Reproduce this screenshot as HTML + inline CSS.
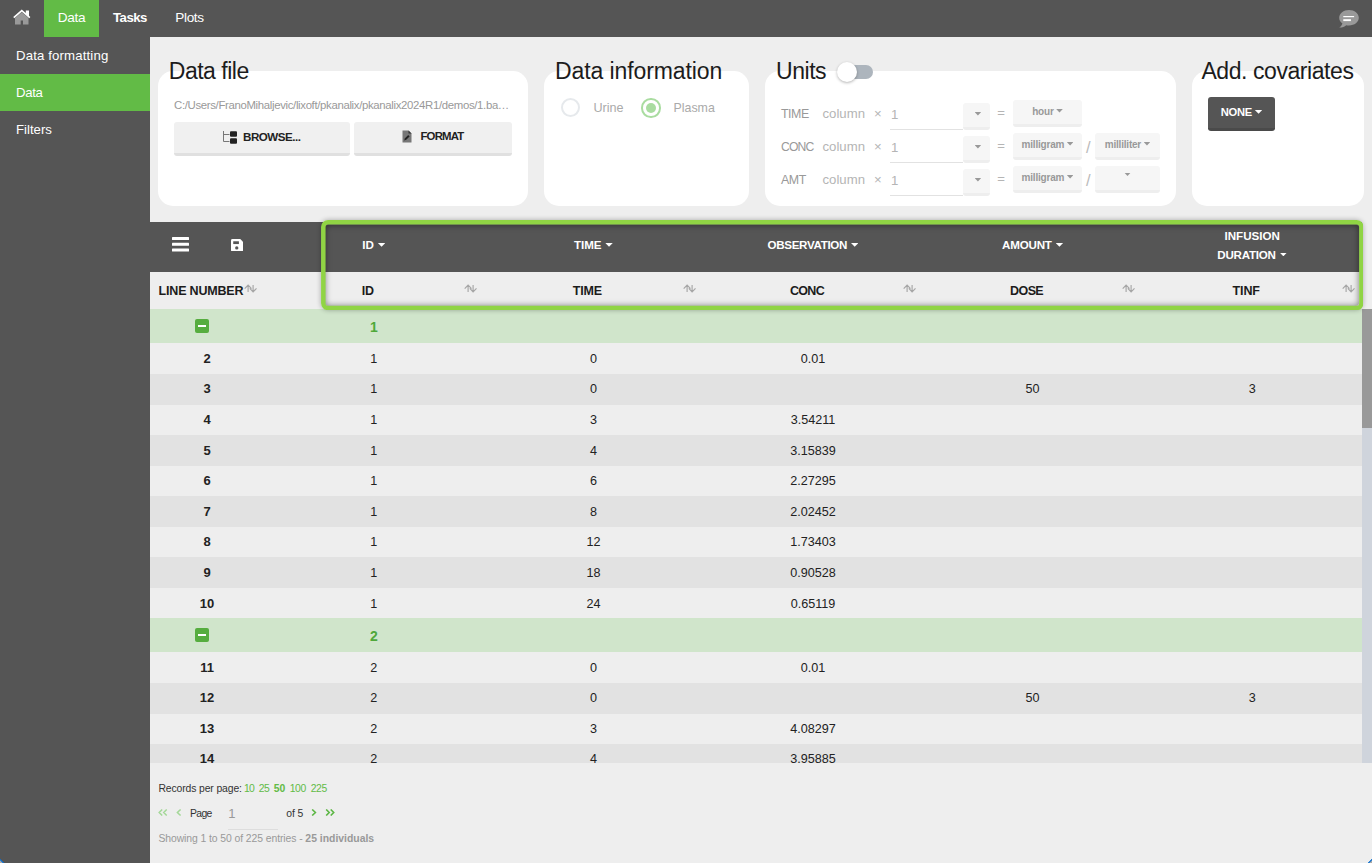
<!DOCTYPE html>
<html lang="en">
<head>
<meta charset="utf-8">
<title>PKanalix - Data</title>
<style>
*{box-sizing:border-box;margin:0;padding:0}
html,body{width:1372px;height:863px;overflow:hidden}
body{font-family:"Liberation Sans",sans-serif;font-size:13px;color:#222;background:#eee;position:relative}
.abs{position:absolute}
.t{position:absolute;white-space:nowrap;line-height:1}

/* top bar */
#topbar{position:absolute;left:0;top:0;width:1372px;height:37px;background:#555}
#topbar .tab{position:absolute;top:0;height:37px;color:#fff;font-size:13.6px;line-height:35.6px;text-align:center;letter-spacing:-.35px}
#topbar .tab.active{background:#62bb46}
#home{position:absolute;left:13px;top:8.6px}
#chat{position:absolute;left:1338px;top:9px}

/* sidebar */
#sidebar{position:absolute;left:0;top:37px;width:150px;height:826px;background:#555}
#sidebar .item{position:absolute;left:0;width:150px;height:37px;color:#fff;font-size:13.2px;line-height:37.4px;padding-left:16px}
#sidebar .item.active{background:#62bb46}

/* cards */
.card{position:absolute;background:#fff;border-radius:15px;top:71px;height:135px}
.card h2{position:absolute;top:-13.5px;font-weight:normal;font-size:23px;line-height:27px;color:#1c1c1c;white-space:nowrap}
.btn{position:absolute;background:#f0f0f0;border-bottom:3px solid #e0e0e0;border-radius:3px;font-weight:bold;color:#222;text-align:center;white-space:nowrap}
.ubtn{position:absolute;height:27px;background:#f6f6f6;border-bottom:3px solid #eee;border-radius:3px;color:#999;font-weight:bold;font-size:10px;line-height:24.2px;letter-spacing:-.2px;text-align:center;white-space:nowrap}
.caret{display:inline-block;width:7.4px;height:3.7px;background:currentColor;clip-path:polygon(0 0,100% 0,50% 100%);vertical-align:middle;margin-left:4px;position:relative;top:-1px}
.ubtn .caret{width:6.6px;height:3.5px;margin-left:2.6px;top:-1.6px}
.ulabel{position:absolute;color:#999;font-size:13.2px;line-height:16px;white-space:nowrap}
.ulabel.l{color:#b5b5b5}
.uline{position:absolute;left:125px;width:73px;height:1px;background:#e2e2e2}

/* table */
#grid{position:absolute;left:150px;top:222px;width:1212px;height:541px;overflow:hidden}
#gridhead{position:absolute;left:0;top:0;width:1212px;height:50px;background:#555}
.hcell{position:absolute;top:0;height:50px;color:#fff;font-weight:bold;font-size:11.6px;text-align:center;white-space:nowrap}
.h2cell{position:absolute;top:50px;height:37px;color:#1c1c1c;font-weight:bold;font-size:12.5px;line-height:38.6px;text-align:center;white-space:nowrap}
.row{position:absolute;left:0;width:1212px;height:31px;font-size:12.6px;line-height:33.5px;color:#222}
.row.odd{background:#e2e2e2}
.row.grp{height:34px;background:#d0e5cb;line-height:36.5px;color:#4fa83a;font-weight:bold;font-size:14px}
.row span{position:absolute;top:0;text-align:center;width:219.6px}
.row span.ln{left:0;width:114px;font-weight:bold;font-size:13px;top:-1px}
.row span.c1{left:114px}.row span.c2{left:333.6px}.row span.c3{left:553.2px}.row span.c4{left:772.8px}.row span.c5{left:992.4px}
.minus{position:absolute;left:44.8px;top:9.8px;width:14.2px;height:14.2px;background:#56ad3f;border-radius:2px}
.minus:after{content:"";position:absolute;left:3px;top:6.1px;width:8.4px;height:2px;background:#fff}
.sort{position:absolute;top:62px}
#hl{position:absolute;left:320.6px;top:220.3px;width:1042.7px;height:90.2px;border-radius:7px;box-shadow:0 0 5px rgba(0,0,0,.3)}
#hl i{position:absolute;left:4.5px;top:4.5px;right:4.5px;bottom:4.5px;border-radius:3px;box-shadow:inset 0 0 6px rgba(0,0,0,.5)}
#hl svg{position:absolute;left:0;top:0}
#sbar{position:absolute;left:1362px;top:309px;width:10px;height:454px;background:#cfd4dc}
#sbar div{position:absolute;left:0;top:0;width:10px;height:119px;background:#999}

/* footer */
#foot{position:absolute;left:150px;top:763px;width:1222px;height:100px;font-size:10.4px;color:#333}
#foot a{color:#62bb46;text-decoration:none}
.corner{position:absolute;bottom:0;width:5px;height:5px;overflow:hidden}
</style>
</head>
<body>

<!-- ============ TOP BAR ============ -->
<div id="topbar">
  <svg id="home" width="18" height="17" viewBox="0 0 18 17">
    <path d="M8.8 3.2 L2 9 V15.6 H7.7 V11.6 H10 V15.6 H15.5 V9 Z" fill="#999"/>
    <path d="M8.8 0.4 L0.2 7.9 L1.3 9.3 L8.8 2.8 L16.3 9.3 L17.4 7.9 L16 6.7 V1.5 H12.8 V3.9 Z" fill="#fff"/>
  </svg>
  <div class="tab active" style="left:44px;width:55px">Data</div>
  <div class="tab" style="left:99px;width:62px;font-weight:bold;font-size:13.2px;letter-spacing:-.5px">Tasks</div>
  <div class="tab" style="left:161px;width:57px">Plots</div>
  <svg id="chat" width="22" height="20" viewBox="0 0 22 20">
    <path d="M11 1 C5.5 1 1.2 4.4 1.2 8.8 C1.2 11.1 2.4 13.1 4.4 14.5 C4 16 2.9 17.4 1.2 18.6 C4.2 18.7 6.6 17.8 8.2 16.2 C9.1 16.4 10 16.5 11 16.5 C16.5 16.5 20.8 13.1 20.8 8.8 C20.8 4.4 16.5 1 11 1 Z" fill="#999"/>
    <rect x="5.3" y="7" width="10.8" height="1.2" fill="#fff"/>
    <rect x="5.3" y="10.2" width="7.6" height="1.9" fill="#fff"/>
  </svg>
</div>

<!-- ============ SIDEBAR ============ -->
<div id="sidebar">
  <div class="item" style="top:0;letter-spacing:.15px">Data formatting</div>
  <div class="item active" style="top:37px;letter-spacing:-.35px">Data</div>
  <div class="item" style="top:74px">Filters</div>
</div>

<!-- ============ CARDS ============ -->
<div class="card" style="left:158px;width:370px">
  <h2 style="left:10.8px;letter-spacing:-.5px">Data file</h2>
  <div class="t" style="left:16px;top:29.1px;font-size:11.4px;color:#999;letter-spacing:-.34px">C:/Users/FranoMihaljevic/lixoft/pkanalix/pkanalix2024R1/demos/1.ba…</div>
  <div class="btn" style="left:16px;top:51.4px;width:175.5px;height:34px;font-size:11.6px;line-height:29.6px;letter-spacing:-.5px">
    <svg width="15" height="13" viewBox="0 0 15 13" style="vertical-align:-2.5px;margin-right:5px">
      <path d="M0.5 0 V10.5 H6.5 M0.5 3.5 H6.5" fill="none" stroke="#777" stroke-width="1"/>
      <rect x="7" y="0.2" width="7" height="5.6" rx="1" fill="#222"/>
      <rect x="7" y="7.2" width="7" height="5.6" rx="1" fill="#222"/>
    </svg>BROWSE...</div>
  <div class="btn" style="left:196px;top:51.4px;width:158px;height:34px;font-size:11.4px;line-height:29.6px;letter-spacing:-.8px">
    <svg width="10" height="13" viewBox="0 0 10 13" style="vertical-align:-2.5px;margin-right:8px">
      <path d="M0.5 0.5 H6.5 L9.5 3.5 V12.5 H0.5 Z" fill="#777"/>
      <path d="M6.5 0.5 V3.5 H9.5 Z" fill="#333"/>
      <path d="M2.2 10.6 L2.8 8.4 L6.2 5 L7.6 6.4 L4.2 9.8 Z" fill="#222"/>
    </svg>FORMAT</div>
</div>

<div class="card" style="left:544px;width:205px">
  <h2 style="left:11px;letter-spacing:-.1px">Data information</h2>
  <div class="abs" style="left:17.3px;top:27.2px;width:19.2px;height:19.2px;border-radius:50%;border:2px solid #e6e9ec;background:#fff"></div>
  <div class="t" style="left:49.5px;top:31.3px;font-size:12.6px;color:#aaa">Urine</div>
  <div class="abs" style="left:97px;top:27px;width:19.6px;height:19.6px;border-radius:50%;border:2px solid #a9dca0;background:#fff"></div>
  <div class="abs" style="left:101.8px;top:31.8px;width:10px;height:10px;border-radius:50%;background:#a9dca0"></div>
  <div class="t" style="left:129.5px;top:31.3px;font-size:12.4px;color:#aaa">Plasma</div>
</div>

<div class="card" style="left:765px;width:411px">
  <h2 style="left:11px;letter-spacing:-.45px">Units</h2>
  <div class="abs" style="left:80px;top:-6px;width:28px;height:14px;border-radius:7px;background:#adb5bd"></div>
  <div class="abs" style="left:72px;top:-9.5px;width:20px;height:20px;border-radius:50%;background:#fff;box-shadow:0 1px 3px rgba(0,0,0,.3)"></div>

  <div class="ulabel" style="left:16px;top:34.5px;font-size:12.4px;letter-spacing:-.45px">TIME</div>
  <div class="ulabel l" style="left:57.5px;top:34.5px">column</div>
  <div class="ulabel l" style="left:109px;top:34.5px">×</div>
  <div class="ulabel l" style="left:126px;top:36px">1</div>
  <div class="uline" style="top:58px"></div>
  <div class="ubtn" style="left:198px;top:32px;width:27px"><span class="caret" style="margin-left:2.8px"></span></div>
  <div class="ulabel l" style="left:232.3px;top:33.9px">=</div>
  <div class="ubtn" style="left:248px;top:29px;width:69px">hour<span class="caret"></span></div>

  <div class="ulabel" style="left:16px;top:67.5px;font-size:12.2px;letter-spacing:-.85px">CONC</div>
  <div class="ulabel l" style="left:57.5px;top:67.5px">column</div>
  <div class="ulabel l" style="left:109px;top:67.5px">×</div>
  <div class="ulabel l" style="left:126px;top:69px">1</div>
  <div class="uline" style="top:91px"></div>
  <div class="ubtn" style="left:198px;top:65px;width:27px"><span class="caret" style="margin-left:2.8px"></span></div>
  <div class="ulabel l" style="left:232.3px;top:66.9px">=</div>
  <div class="ubtn" style="left:248px;top:62px;width:69px">milligram<span class="caret"></span></div>
  <div class="ulabel l" style="left:321px;top:67.6px;font-size:16.5px;color:#bbb">/</div>
  <div class="ubtn" style="left:330px;top:62px;width:65px">milliliter<span class="caret"></span></div>

  <div class="ulabel" style="left:16px;top:100.5px;font-size:12.4px;letter-spacing:-.45px">AMT</div>
  <div class="ulabel l" style="left:57.5px;top:100.5px">column</div>
  <div class="ulabel l" style="left:109px;top:100.5px">×</div>
  <div class="ulabel l" style="left:126px;top:102px">1</div>
  <div class="uline" style="top:124px"></div>
  <div class="ubtn" style="left:198px;top:98px;width:27px"><span class="caret" style="margin-left:2.8px"></span></div>
  <div class="ulabel l" style="left:232.3px;top:99.9px">=</div>
  <div class="ubtn" style="left:248px;top:95px;width:69px">milligram<span class="caret"></span></div>
  <div class="ulabel l" style="left:321px;top:100.6px;font-size:16.5px;color:#bbb">/</div>
  <div class="ubtn" style="left:330px;top:95px;width:65px"><span class="caret" style="margin-left:0;top:-4px"></span></div>
</div>

<div class="card" style="left:1192px;width:172px">
  <h2 style="left:9.4px;letter-spacing:-.43px">Add. covariates</h2>
  <div class="btn" style="left:16px;top:25.8px;width:67px;height:34px;background:#555;border-bottom-color:#4a4a4a;color:#fff;font-size:11.2px;line-height:30.4px;letter-spacing:-.3px">NONE<span class="caret" style="margin-left:3px"></span></div>
</div>

<!-- ============ DATA GRID ============ -->
<div id="grid">
  <div id="gridhead">
    <svg class="abs" style="left:22px;top:15px" width="17" height="15" viewBox="0 0 17 15">
      <rect x="0" y="0" width="17" height="3" rx=".5" fill="#fff"/><rect x="0" y="5.8" width="17" height="3" rx=".5" fill="#fff"/><rect x="0" y="11.6" width="17" height="3" rx=".5" fill="#fff"/>
    </svg>
    <svg class="abs" style="left:81px;top:16.7px" width="12.2" height="12.4" viewBox="0 0 12.5 12.5" preserveAspectRatio="none">
      <path d="M1.5 0 H9.5 L12.5 3 V11 Q12.5 12.5 11 12.5 H1.5 Q0 12.5 0 11 V1.5 Q0 0 1.5 0 Z" fill="#fff"/>
      <rect x="2.3" y="2.3" width="5.8" height="2.8" fill="#555"/>
      <circle cx="5.9" cy="9" r="1.7" fill="#555"/>
    </svg>
    <div class="hcell" style="left:114px;width:219.6px;line-height:46.4px">ID<span class="caret"></span></div>
    <div class="hcell" style="left:333.6px;width:219.6px;line-height:46.4px;letter-spacing:-.1px">TIME<span class="caret"></span></div>
    <div class="hcell" style="left:553.2px;width:219.6px;line-height:46.4px;letter-spacing:-.33px">OBSERVATION<span class="caret"></span></div>
    <div class="hcell" style="left:772.8px;width:219.6px;line-height:46.4px;letter-spacing:-.2px">AMOUNT<span class="caret"></span></div>
    <div class="hcell" style="left:992.4px;width:219.6px;line-height:19px;padding-top:3.5px">INFUSION<br><span style="letter-spacing:-.25px">DURATION</span><span class="caret"></span></div>
  </div>

  <div class="h2cell" style="left:8.6px;text-align:left;letter-spacing:-.19px">LINE NUMBER</div>
  <div class="h2cell" style="left:114px;width:207.6px;letter-spacing:-.2px">ID</div>
  <div class="h2cell" style="left:333.6px;width:207.6px;letter-spacing:-.18px">TIME</div>
  <div class="h2cell" style="left:553.2px;width:207.6px;letter-spacing:-.7px">CONC</div>
  <div class="h2cell" style="left:772.8px;width:207.6px;letter-spacing:-.6px">DOSE</div>
  <div class="h2cell" style="left:992.4px;width:207.6px;letter-spacing:-.15px">TINF</div>

  <svg class="sort" style="left:94px" width="13" height="9" viewBox="0 0 13 9"><path d="M4.1 8 V1.2 M0.7 4.6 L4.1 1 L7.5 4.6 M9.1 0.9 V7.8 M5.8 4.4 L9.1 8 L12.5 4.4" fill="none" stroke="#a6a6a6" stroke-width="1.15"/></svg>
  <svg class="sort" style="left:313.6px" width="13" height="9" viewBox="0 0 13 9"><path d="M4.1 8 V1.2 M0.7 4.6 L4.1 1 L7.5 4.6 M9.1 0.9 V7.8 M5.8 4.4 L9.1 8 L12.5 4.4" fill="none" stroke="#a6a6a6" stroke-width="1.15"/></svg>
  <svg class="sort" style="left:533.2px" width="13" height="9" viewBox="0 0 13 9"><path d="M4.1 8 V1.2 M0.7 4.6 L4.1 1 L7.5 4.6 M9.1 0.9 V7.8 M5.8 4.4 L9.1 8 L12.5 4.4" fill="none" stroke="#a6a6a6" stroke-width="1.15"/></svg>
  <svg class="sort" style="left:752.8px" width="13" height="9" viewBox="0 0 13 9"><path d="M4.1 8 V1.2 M0.7 4.6 L4.1 1 L7.5 4.6 M9.1 0.9 V7.8 M5.8 4.4 L9.1 8 L12.5 4.4" fill="none" stroke="#a6a6a6" stroke-width="1.15"/></svg>
  <svg class="sort" style="left:972.4px" width="13" height="9" viewBox="0 0 13 9"><path d="M4.1 8 V1.2 M0.7 4.6 L4.1 1 L7.5 4.6 M9.1 0.9 V7.8 M5.8 4.4 L9.1 8 L12.5 4.4" fill="none" stroke="#a6a6a6" stroke-width="1.15"/></svg>
  <svg class="sort" style="left:1192px" width="13" height="9" viewBox="0 0 13 9"><path d="M4.1 8 V1.2 M0.7 4.6 L4.1 1 L7.5 4.6 M9.1 0.9 V7.8 M5.8 4.4 L9.1 8 L12.5 4.4" fill="none" stroke="#a6a6a6" stroke-width="1.15"/></svg>

  <div class="row grp" style="top:87px"><i class="minus"></i><span class="c1">1</span></div>
  <div class="row" style="top:121px"><span class="ln">2</span><span class="c1">1</span><span class="c2">0</span><span class="c3">0.01</span></div>
  <div class="row odd" style="top:152px;line-height:31.5px"><span class="ln">3</span><span class="c1">1</span><span class="c2">0</span><span class="c4">50</span><span class="c5">3</span></div>
  <div class="row" style="top:182px"><span class="ln">4</span><span class="c1">1</span><span class="c2">3</span><span class="c3">3.54211</span></div>
  <div class="row odd" style="top:213px"><span class="ln">5</span><span class="c1">1</span><span class="c2">4</span><span class="c3">3.15839</span></div>
  <div class="row" style="top:243px"><span class="ln">6</span><span class="c1">1</span><span class="c2">6</span><span class="c3">2.27295</span></div>
  <div class="row odd" style="top:274px"><span class="ln">7</span><span class="c1">1</span><span class="c2">8</span><span class="c3">2.02452</span></div>
  <div class="row" style="top:305px;line-height:31.5px"><span class="ln">8</span><span class="c1">1</span><span class="c2">12</span><span class="c3">1.73403</span></div>
  <div class="row odd" style="top:335px"><span class="ln">9</span><span class="c1">1</span><span class="c2">18</span><span class="c3">0.90528</span></div>
  <div class="row" style="top:366px"><span class="ln">10</span><span class="c1">1</span><span class="c2">24</span><span class="c3">0.65119</span></div>
  <div class="row grp" style="top:396px"><i class="minus"></i><span class="c1">2</span></div>
  <div class="row" style="top:430px"><span class="ln">11</span><span class="c1">2</span><span class="c2">0</span><span class="c3">0.01</span></div>
  <div class="row odd" style="top:461px;line-height:31.5px"><span class="ln">12</span><span class="c1">2</span><span class="c2">0</span><span class="c4">50</span><span class="c5">3</span></div>
  <div class="row" style="top:491px"><span class="ln">13</span><span class="c1">2</span><span class="c2">3</span><span class="c3">4.08297</span></div>
  <div class="row odd" style="top:522px;line-height:31.5px"><span class="ln">14</span><span class="c1">2</span><span class="c2">4</span><span class="c3">3.95885</span></div>
</div>

<div id="sbar"><div></div></div>
<div id="hl"><i></i><svg width="1042.7" height="90.2" viewBox="0 0 1042.7 90.2"><rect x="2.25" y="2.25" width="1038.2" height="85.7" rx="4.75" fill="none" stroke="#90d444" stroke-width="4.5"/></svg></div>

<!-- ============ FOOTER / PAGINATION ============ -->
<div id="foot">
  <div class="t" style="left:8.4px;top:20.5px;letter-spacing:-.12px">Records per page:</div>
  <div class="t" style="left:93.9px;top:20.5px;letter-spacing:-.6px"><a>10</a></div>
  <div class="t" style="left:108.8px;top:20.5px;letter-spacing:-.5px"><a>25</a></div>
  <div class="t" style="left:123.8px;top:20.5px;letter-spacing:-.1px"><a><b>50</b></a></div>
  <div class="t" style="left:139.7px;top:20.5px;letter-spacing:-.35px"><a>100</a></div>
  <div class="t" style="left:160.7px;top:20.5px;letter-spacing:-.35px"><a>225</a></div>
  <svg class="abs" style="left:8px;top:46.3px" width="10" height="7" viewBox="0 0 10 7"><path d="M4.2 0.5 L1.2 3.5 L4.2 6.5 M8.7 0.5 L5.7 3.5 L8.7 6.5" fill="none" stroke="#a4d898" stroke-width="1.5"/></svg>
  <svg class="abs" style="left:26px;top:46.3px" width="6" height="7" viewBox="0 0 6 7"><path d="M4.6 0.5 L1.4 3.5 L4.6 6.5" fill="none" stroke="#a4d898" stroke-width="1.5"/></svg>
  <div class="t" style="left:39.9px;top:45.5px;letter-spacing:-.6px">Page</div>
  <div class="t" style="left:78.2px;top:44px;color:#999;font-size:13px">1</div>
  <div class="abs" style="left:77.8px;top:66px;width:50px;height:1px;background:#ddd"></div>
  <div class="t" style="left:136.3px;top:45.5px;letter-spacing:-.1px">of 5</div>
  <svg class="abs" style="left:161px;top:46.3px" width="6" height="7" viewBox="0 0 6 7"><path d="M1.2 0.5 L4.4 3.5 L1.2 6.5" fill="none" stroke="#5cb644" stroke-width="1.6"/></svg>
  <svg class="abs" style="left:174.5px;top:46.3px" width="10" height="7" viewBox="0 0 10 7"><path d="M1.2 0.5 L4.2 3.5 L1.2 6.5 M5.7 0.5 L8.7 3.5 L5.7 6.5" fill="none" stroke="#5cb644" stroke-width="1.6"/></svg>
  <div class="t" style="left:8.4px;top:71.1px;color:#999;letter-spacing:-.08px">Showing 1 to 50 of 225 entries - <b style="letter-spacing:0">25 individuals</b></div>
</div>

<!-- window corner artefacts -->
<div class="corner" style="left:0;background:linear-gradient(to bottom left,transparent 54%,#0a6fd0 61%,#0a6fd0 68%,#aaa 76%)"></div>
<div class="corner" style="right:0;background:linear-gradient(to bottom right,transparent 54%,#0a6fd0 61%,#0a6fd0 68%,#aaa 76%)"></div>

</body>
</html>
